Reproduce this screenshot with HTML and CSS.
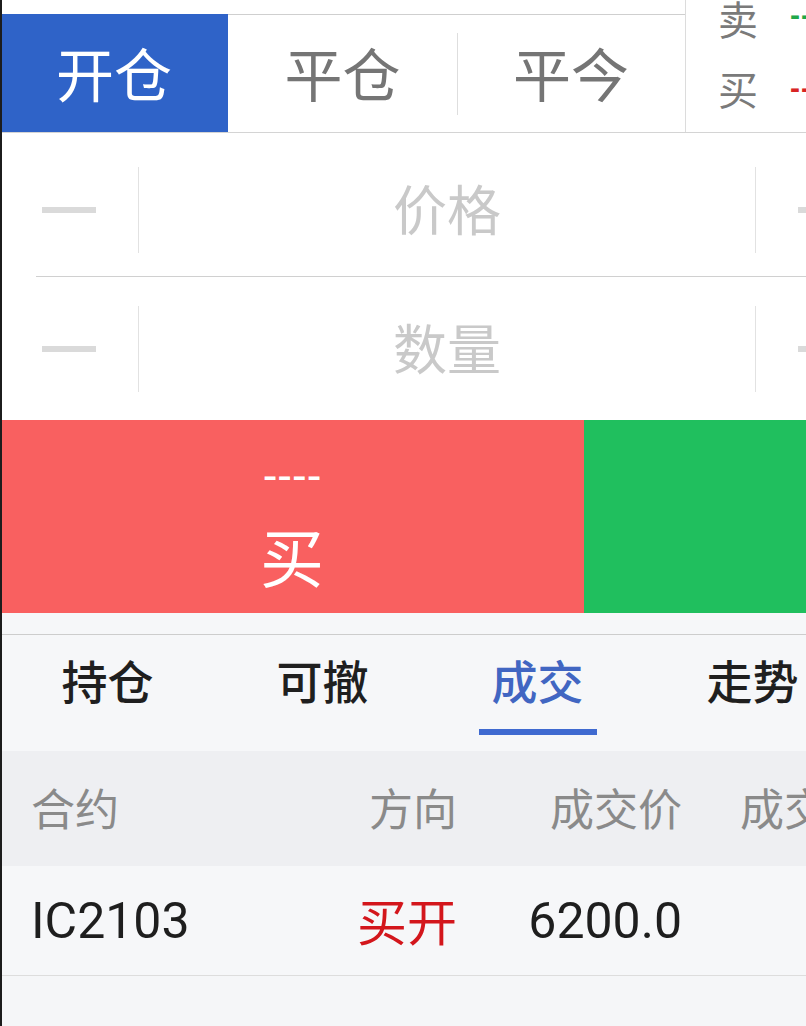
FILE: index.html
```html
<!DOCTYPE html>
<html lang="zh-CN">
<head>
<meta charset="utf-8">
<title>交易</title>
<link rel="stylesheet" href="styles.css">
</head>
<body>
<div class="page">
  <header class="trade-head">
    <div class="mode-tabs">
      <div class="mode active">开仓</div>
      <div class="mode">平仓</div>
      <div class="vline"></div>
      <div class="mode">平今</div>
    </div>
    <div class="quote">
      <div class="q-row"><span class="q-label">卖</span><span class="q-val sell">--</span></div>
      <div class="q-row"><span class="q-label">买</span><span class="q-val buy">--</span></div>
    </div>
  </header>

  <section class="inputs">
    <div class="field first">
      <div class="step"><span class="minus"></span></div>
      <div class="field-input">价格</div>
      <div class="step"><span class="plus"></span></div>
    </div>
    <div class="sep"></div>
    <div class="field">
      <div class="step"><span class="minus"></span></div>
      <div class="field-input">数量</div>
      <div class="step"><span class="plus"></span></div>
    </div>
  </section>

  <div class="actions">
    <div class="act act-buy">
      <span class="act-price">----</span>
      <span class="act-label">买</span>
    </div>
    <div class="act act-sell"></div>
  </div>

  <div class="gap"></div>

  <nav class="tabs">
    <div class="tab">持仓</div>
    <div class="tab">可撤</div>
    <div class="tab active">成交</div>
    <div class="tab">走势</div>
  </nav>

  <div class="table">
    <div class="t-row t-head">
      <div class="c c1">合约</div>
      <div class="c">方向</div>
      <div class="c">成交价</div>
      <div class="c">成交量</div>
    </div>
    <div class="t-row t-data">
      <div class="c c1 num">IC2103</div>
      <div class="c dir-buy">买开</div>
      <div class="c num">6200.0</div>
      <div class="c num">1</div>
    </div>
  </div>
</div>
</body>
</html>
```

FILE: styles.css
```css
* { box-sizing: border-box; }
html, body {
  margin: 0;
  padding: 0;
}
body {
  width: 806px;
  height: 1026px;
  overflow: hidden;
  background: #f5f6f8;
  font-family: "Noto Sans CJK SC", "Noto Sans", sans-serif;
}
.page {
  position: relative;
  width: 806px;
  height: 1026px;
  overflow: hidden;
  background: #f5f6f8;
}
.page::after {
  content: "";
  position: absolute;
  left: 0;
  top: 0;
  bottom: 0;
  width: 2px;
  background: #1c1c1c;
}

/* ---------- header ---------- */
.trade-head {
  display: flex;
  height: 133px;
  background: #fff;
  border-bottom: 1px solid #d4d4d4;
}
.mode-tabs {
  display: flex;
  align-items: center;
  width: 685px;
  padding-top: 14px;
  flex: none;
}
.mode {
  height: 118px;
  border-top: 1px solid #cfcfcf;
  display: flex;
  align-items: center;
  justify-content: center;
  font-size: 58px;
  color: #757575;
  width: 228px;
  flex: none;
  padding-bottom: 4px;
}
.mode.active {
  background: #2f63c8;
  border-top-color: #2f63c8;
  color: #fff;
}
.mode-tabs .mode:nth-child(2) { width: 229px; }
.vline {
  width: 1px;
  height: 82px;
  background: #dedede;
  flex: none;
  align-self: center;
  margin-top: 2px;
  margin-right: -1px;
  position: relative;
}
.quote {
  flex: 1;
  border-left: 1px solid #dcdcdc;
  overflow: hidden;
  padding-left: 32px;
}
.q-row {
  height: 70px;
  display: flex;
  align-items: center;
  gap: 32px;
  white-space: nowrap;
  width: 200px;
}
.q-row:first-child { margin-top: -17px; }
.q-label {
  font-size: 40px;
  color: #7a7a7a;
  flex: none;
}
.q-val {
  flex: none;
  font-family: "Liberation Sans", sans-serif;
  font-size: 30px;
  font-weight: bold;
  letter-spacing: 1px;
}
.q-val.sell { color: #1fa84a; margin-top: -6px; }
.q-val.buy { color: #d82424; }

/* ---------- inputs ---------- */
.inputs {
  background: #fff;
  overflow: hidden;
}
.field {
  display: flex;
  align-items: center;
  height: 143px;
  width: 894px;
}
.field.first { padding-top: 10px; }
.step {
  width: 138px;
  flex: none;
  display: flex;
  align-items: center;
  justify-content: center;
  position: relative;
  height: 40px;
}
.minus {
  width: 54px;
  height: 6px;
  background: #dadada;
}
.plus {
  width: 54px;
  height: 6px;
  background: #dadada;
  position: relative;
}
.plus::after {
  content: "";
  position: absolute;
  left: 24px;
  top: -24px;
  width: 6px;
  height: 54px;
  background: #dadada;
}
.field-input {
  flex: none;
  width: 618px;
  height: 86px;
  border-left: 1px solid #e2e2e2;
  border-right: 1px solid #e2e2e2;
  display: flex;
  align-items: center;
  justify-content: center;
  font-size: 54px;
  color: #c9c9c9;
  padding-bottom: 4px;
}
.sep {
  height: 1px;
  margin-left: 36px;
  background: #d0d0d0;
}

/* ---------- actions ---------- */
.actions {
  display: flex;
  height: 193px;
}
.act {
  display: flex;
  flex-direction: column;
  align-items: center;
  color: #fff;
}
.act-buy {
  width: 584px;
  flex: none;
  background: #f96060;
  padding-top: 35px;
}
.act-sell {
  flex: 1;
  background: #20bf5e;
}
.act-price {
  font-family: "Liberation Sans", sans-serif;
  font-size: 44px;
  line-height: 40px;
  height: 40px;
}
.act-label {
  margin-top: 24px;
  font-size: 64px;
  line-height: 70px;
}

.gap {
  height: 22px;
  background: #f6f7f9;
  border-bottom: 1px solid #cdcdcd;
}

/* ---------- tabs ---------- */
.tabs {
  display: flex;
  height: 116px;
  background: #f6f7f9;
}
.tab {
  width: 215px;
  flex: none;
  display: flex;
  flex-direction: column;
  align-items: center;
  font-size: 46px;
  line-height: 88px;
  color: #1f1f1f;
  font-weight: 500;
}
.tab.active {
  color: #4166c2;
}
.tab.active::after {
  content: "";
  width: 118px;
  height: 6px;
  margin-top: 6px;
  background: #3f6ad0;
}

/* ---------- table ---------- */
.table {
  width: 906px;
}
.t-row {
  display: grid;
  grid-template-columns: 300px 157px 225px 190px;
  align-items: center;
}
.t-head {
  height: 115px;
  background: #eeeff2;
  font-size: 44px;
  color: #8a8a8a;
}
.t-data {
  height: 110px;
  background: #f6f7f9;
  border-bottom: 1px solid #dddddd;
  font-size: 50px;
  color: #1e1e1e;
}
.c {
  text-align: right;
  white-space: nowrap;
  padding-bottom: 4px;
}
.c1 {
  text-align: left;
  padding-left: 31px;
}
.num {
  font-family: Roboto, "Liberation Sans", sans-serif;
  font-size: 50px;
  padding-bottom: 0;
}
.dir-buy {
  color: #d3161c;
}
```
